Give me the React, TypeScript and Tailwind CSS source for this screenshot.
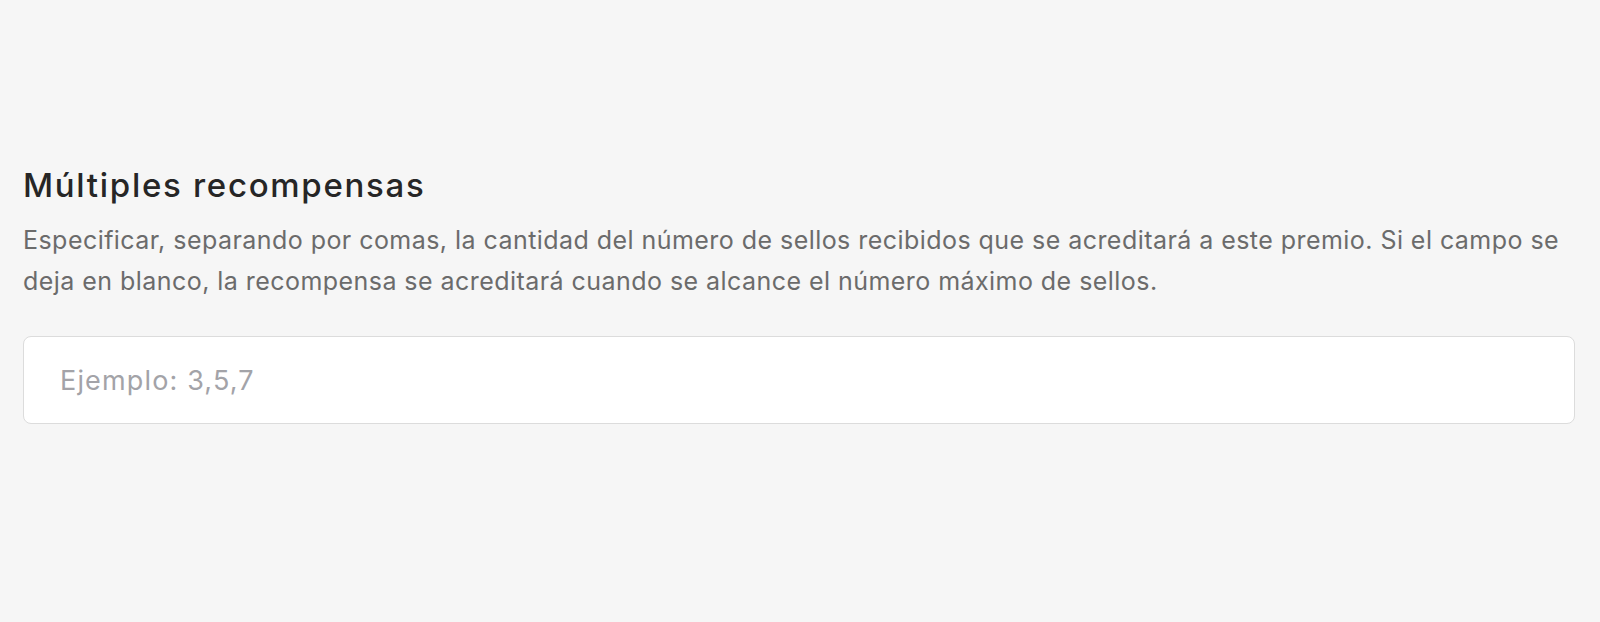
import React from 'react';

const App: React.FC = () => {
  return (
    <div className="w-full min-h-[622px] bg-[#f6f6f6] pl-[23px] pr-[25px] pt-[162px] font-['Inter',sans-serif]">
      <h2 className="text-[33px] leading-[46px] font-medium text-[#262626] tracking-[1.7px]">Múltiples recompensas</h2>
      <p className="mt-[12px] text-[25px] leading-[41px] text-[#6b6b6b] tracking-[0.45px]">
        Especificar, separando por comas, la cantidad del número de sellos recibidos que se acreditará a este premio. Si el campo se deja en blanco, la recompensa se acreditará cuando se alcance el número máximo de sellos.
      </p>
      <input
        type="text"
        placeholder="Ejemplo: 3,5,7"
        className="mt-[34px] block w-full h-[88px] bg-white border border-[#dcdcdc] rounded-lg pl-[36px] text-[27px] tracking-[1.15px] text-[#333] placeholder:text-[#a3a3a8] outline-none"
      />
    </div>
  );
};

export default App;
